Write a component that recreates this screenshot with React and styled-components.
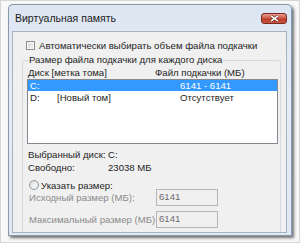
import React from "react";
import styled, { createGlobalStyle } from "styled-components";

const Global = createGlobalStyle`
  html, body {
    margin: 0;
    padding: 0;
    background: #f7f7f7;
  }
  * {
    box-sizing: border-box;
  }
`;

const Page = styled.div`
  width: 300px;
  height: 243px;
  padding: 3px 0 0 7px;
  border: 1px solid #d6d6d6;
  background: #f8f8f8;
  font-family: "Liberation Sans", Arial, sans-serif;
  font-size: 9.6px;
  color: #1e1e1e;
  white-space: nowrap;
  overflow: hidden;
`;

const Window = styled.div`
  width: 284px;
  height: 232px;
  display: flex;
  flex-direction: column;
  border: 1px solid #8a97a6;
  border-right-color: #7f9fc8;
  border-radius: 5px 5px 0 0;
  background: linear-gradient(180deg, #dce6f2 0%, #e4ecf6 40%, #dfe8f3 100%);
  box-shadow: 2px 2px 3px rgba(0, 0, 0, 0.55);
  padding: 0 4px 2px 3px;
`;

const TitleBar = styled.div`
  height: 26px;
  display: flex;
  align-items: center;
  justify-content: space-between;
  padding: 0 0 0 3px;
`;

const Title = styled.span`
  font-size: 10.5px;
  color: #1b1b1b;
`;

const CloseButton = styled.div`
  width: 26px;
  height: 11px;
  border: 1px solid #7a2a22;
  border-radius: 3px;
  background: linear-gradient(180deg, #e59a8c 0%, #cf5f4d 45%, #b83a28 55%, #c9573f 100%);
  display: flex;
  align-items: center;
  justify-content: center;
  margin-top: 1px;
`;

const Content = styled.div`
  flex: 1;
  background: #f0f0f0;
  border: 1px solid #a6b3c2;
  padding: 8px 5px 0 9px;
  display: flex;
  flex-direction: column;
  overflow: hidden;
`;

const CheckRow = styled.div`
  display: flex;
  align-items: center;
  gap: 4px;
  height: 11px;
  margin-left: 4px;
`;

const CheckBox = styled.span`
  width: 9px;
  height: 9px;
  border: 1px solid #8e8f8f;
  background: linear-gradient(135deg, #d8d8d8 0%, #f4f4f4 100%);
  box-shadow: inset 0 0 0 1px #f6f6f6;
`;

const Group = styled.fieldset`
  flex: 1;
  margin: 4px 0 0 0;
  padding: 0 2px 0 4px;
  border: 1px solid #d3d9df;
  border-bottom: none;
  border-radius: 3px 3px 0 0;
  min-width: 0;
`;

const Legend = styled.legend`
  padding: 0 1px;
  margin-left: 1px;
  line-height: 10px;
`;

const Headers = styled.div`
  display: grid;
  grid-template-columns: 127px 1fr;
  height: 13px;
  align-items: center;
  padding-left: 1px;
  margin-top: 1px;
`;

const ListBox = styled.div`
  height: 65px;
  background: #fff;
  border: 1px solid #848891;
  display: flex;
  flex-direction: column;
`;

const Row = styled.div`
  display: grid;
  grid-template-columns: 27px 123px 1fr;
  height: ${(p) => (p.$selected ? "11px" : "12px")};
  align-items: center;
  padding-left: 2px;
  background: ${(p) => (p.$selected ? "#3399ff" : "transparent")};
  color: ${(p) => (p.$selected ? "#fff" : "#1e1e1e")};
`;

const Info = styled.div`
  display: grid;
  grid-template-columns: 80px 1fr;
  grid-auto-rows: 13px;
  align-items: center;
  margin-top: 4px;
  padding-left: 1px;
`;

const RadioRow = styled.div`
  display: flex;
  align-items: center;
  gap: 2px;
  height: 12px;
  margin-top: 5px;
  margin-left: 2px;
`;

const Radio = styled.span`
  width: 10px;
  height: 10px;
  border-radius: 50%;
  border: 1px solid #8f9aa5;
  background: radial-gradient(circle at 60% 60%, #f6f6f6 0%, #d7d7d7 100%);
`;

const SizeRow = styled.div`
  display: grid;
  grid-template-columns: 127px 62px;
  align-items: center;
  height: 17px;
  margin-top: ${(p) => p.$gap || "0px"};
  padding-left: 2px;
  color: #8a8a8a;
`;

const Field = styled.div`
  height: 17px;
  border: 1px solid #b6b6b6;
  background: #f0f0f0;
  color: #6d6d6d;
  padding: 0 2px;
  line-height: 13px;
`;

export default function App() {
  return (
    <>
      <Global />
      <Page>
        <Window>
          <TitleBar>
            <Title>Виртуальная память</Title>
            <CloseButton>
              <svg width="9" height="7" viewBox="0 0 9 7">
                <path d="M1 0.8 L8 6.2 M8 0.8 L1 6.2" stroke="#5a1a12" strokeWidth="2.6" />
                <path d="M1 0.8 L8 6.2 M8 0.8 L1 6.2" stroke="#fff" strokeWidth="1.6" />
              </svg>
            </CloseButton>
          </TitleBar>
          <Content>
            <CheckRow>
              <CheckBox />
              <span>Автоматически выбирать объем файла подкачки</span>
            </CheckRow>
            <Group>
              <Legend>Размер файла подкачки для каждого диска</Legend>
              <Headers>
                <span>Диск [метка тома]</span>
                <span>Файл подкачки (МБ)</span>
              </Headers>
              <ListBox>
                <Row $selected>
                  <span>C:</span>
                  <span></span>
                  <span>6141 - 6141</span>
                </Row>
                <Row>
                  <span>D:</span>
                  <span>[Новый том]</span>
                  <span>Отсутствует</span>
                </Row>
              </ListBox>
              <Info>
                <span>Выбранный диск:</span>
                <span>C:</span>
                <span>Свободно:</span>
                <span>23038 МБ</span>
              </Info>
              <RadioRow>
                <Radio />
                <span>Указать размер:</span>
              </RadioRow>
              <SizeRow $gap="-2px">
                <span>Исходный размер (МБ):</span>
                <Field>6141</Field>
              </SizeRow>
              <SizeRow $gap="5px">
                <span>Максимальный размер (МБ):</span>
                <Field>6141</Field>
              </SizeRow>
            </Group>
          </Content>
        </Window>
      </Page>
    </>
  );
}
